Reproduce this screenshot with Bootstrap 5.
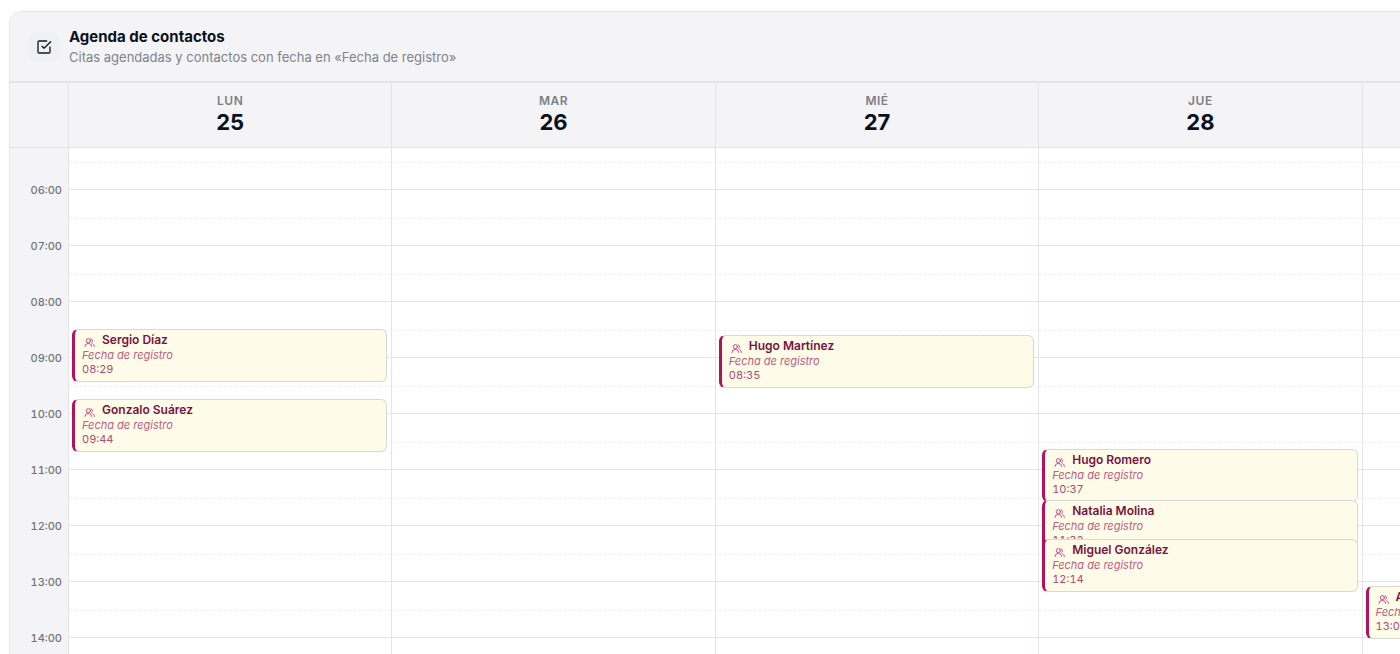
<!DOCTYPE html>
<html lang="es">
<head>
<meta charset="utf-8">
<meta name="viewport" content="width=device-width, initial-scale=1">
<title>Agenda de contactos</title>
<link rel="stylesheet" href="https://cdn.jsdelivr.net/npm/bootstrap@5.3.0/dist/css/bootstrap.min.css">
<style>
:root { --line: #e3e4e8; --panel: #f4f4f7; --hour: 56px; --gutter: 59px; }
body { font-family: Inter, "Liberation Sans", sans-serif; color: #09111f; background: #fff; }
.agenda { width: calc(120vw - 2px); margin: 11px 0 0 9px; border: 1px solid var(--line); border-radius: 12px; }
.agenda-head { background: var(--panel); border-bottom: 2px solid var(--line); padding: 14px 19px; height: 71px; gap: 10px; }
.tile { width: 30px; height: 30px; border-radius: 6px; background: #eff1f4; }
.agenda-title { font-size: 15px; line-height: 21px; font-weight: 700; }
.agenda-note { font-size: 13px; line-height: 21px; color: #7f838b; }
.days { display: grid; grid-template-columns: var(--gutter) repeat(5, 1fr); }
.day-head { background: var(--panel); border-bottom: 1px solid var(--line); border-right: 1px solid var(--line); height: 65px; padding-top: 9px; }
.day-name { font-size: 12px; line-height: 17px; font-weight: 600; letter-spacing: 0.5px; color: #7b7f87; }
.day-num { font-size: 22px; line-height: 26px; font-weight: 700; }
.board { display: grid; margin-top: -14px; }
.board > * { grid-area: 1 / 1; }
.hour-row { height: var(--hour); }
.hour-label { width: var(--gutter); background: var(--panel); padding: 0 7px 0 0; font-size: 11px; line-height: 16px; font-weight: 500; font-variant-numeric: tabular-nums; color: #6f747c; text-align: right; }
.hour-label span { margin-bottom: -8px; z-index: 1; }
.slot { border-bottom: 1px solid var(--line); }
.slot::before { content: ""; display: block; height: 29px; border-bottom: 1px dashed #f0f0f3; }
.lane { border-right: 1px solid var(--line); }
.event { top: calc((var(--min) - 300) * var(--hour) / 60); left: 3px; right: 4px; height: 53px; padding: 2px 6px 0 7px;
  background: #fefbe9; border: 1px solid #d6d9d6; border-left: 3px solid #b3125a; border-radius: 6px; overflow: hidden; white-space: nowrap; }
.event-name { font-size: 12px; line-height: 16px; font-weight: 600; color: #781340; gap: 7px; }
.event-name svg { margin: 5px 0 0 2px; }
.event-kind { font-size: 11px; line-height: 14px; font-style: oblique 14deg; color: #b9607f; }
.event-time { font-size: 11px; line-height: 14px; font-variant-numeric: tabular-nums; color: #ad4b70; }
</style>
<script src="https://cdn.jsdelivr.net/npm/bootstrap@5.3.0/dist/js/bootstrap.bundle.min.js"></script>
</head>
<body class="vh-100 overflow-hidden">
<svg class="d-none" aria-hidden="true">
  <symbol id="people" viewBox="0 0 24 24"><g fill="none" stroke="#bd3d79" stroke-width="2" stroke-linecap="round" stroke-linejoin="round"><path d="M2 20.500a7.500 6.500 0 0 1 15 0"/><circle cx="9.500" cy="8" r="4.500"/><path d="M15.500 4a4.500 4.500 0 0 1 1 8"/><path d="M19 14.500c2 1 3.500 3 3.500 6"/></g></symbol>
</svg>
<main class="agenda overflow-hidden">
  <header class="agenda-head d-flex align-items-center">
    <div class="tile d-flex align-items-center justify-content-center">
      <svg width="16" height="16" viewBox="0 0 24 24" fill="none" stroke="#111827" stroke-width="2" stroke-linecap="round" stroke-linejoin="round"><path d="m9 11 3 3L22 4"/><path d="M21 12v7a2 2 0 0 1-2 2H5a2 2 0 0 1-2-2V5a2 2 0 0 1 2-2h11"/></svg>
    </div>
    <div>
      <h1 class="agenda-title mb-0">Agenda de contactos</h1>
      <p class="agenda-note mb-0">Citas agendadas y contactos con fecha en «Fecha de registro»</p>
    </div>
  </header>
  <div class="days text-center position-relative z-3">
    <div class="day-head"></div>
    <div class="day-head"><div class="day-name">LUN</div><div class="day-num">25</div></div>
    <div class="day-head"><div class="day-name">MAR</div><div class="day-num">26</div></div>
    <div class="day-head"><div class="day-name">MIÉ</div><div class="day-num">27</div></div>
    <div class="day-head"><div class="day-name">JUE</div><div class="day-num">28</div></div>
    <div class="day-head"></div>
  </div>
  <div class="overflow-hidden">
  <div class="board">
    <div>
      <div class="hour-row d-flex"><div class="hour-label d-flex align-items-end justify-content-end"><span>06:00</span></div><div class="slot flex-grow-1"></div></div>
      <div class="hour-row d-flex"><div class="hour-label d-flex align-items-end justify-content-end"><span>07:00</span></div><div class="slot flex-grow-1"></div></div>
      <div class="hour-row d-flex"><div class="hour-label d-flex align-items-end justify-content-end"><span>08:00</span></div><div class="slot flex-grow-1"></div></div>
      <div class="hour-row d-flex"><div class="hour-label d-flex align-items-end justify-content-end"><span>09:00</span></div><div class="slot flex-grow-1"></div></div>
      <div class="hour-row d-flex"><div class="hour-label d-flex align-items-end justify-content-end"><span>10:00</span></div><div class="slot flex-grow-1"></div></div>
      <div class="hour-row d-flex"><div class="hour-label d-flex align-items-end justify-content-end"><span>11:00</span></div><div class="slot flex-grow-1"></div></div>
      <div class="hour-row d-flex"><div class="hour-label d-flex align-items-end justify-content-end"><span>12:00</span></div><div class="slot flex-grow-1"></div></div>
      <div class="hour-row d-flex"><div class="hour-label d-flex align-items-end justify-content-end"><span>13:00</span></div><div class="slot flex-grow-1"></div></div>
      <div class="hour-row d-flex"><div class="hour-label d-flex align-items-end justify-content-end"><span>14:00</span></div><div class="slot flex-grow-1"></div></div>
      <div class="hour-row d-flex"><div class="hour-label"></div><div class="slot flex-grow-1"></div></div>
    </div>
    <div class="days">
      <div class="lane"></div>
      <div class="lane position-relative">
        <article class="event position-absolute" style="--min:509"><div class="event-name d-flex"><svg width="11" height="11"><use href="#people"/></svg>Sergio Díaz</div><div class="event-kind">Fecha de registro</div><div class="event-time">08:29</div></article>
        <article class="event position-absolute" style="--min:584"><div class="event-name d-flex"><svg width="11" height="11"><use href="#people"/></svg>Gonzalo Suárez</div><div class="event-kind">Fecha de registro</div><div class="event-time">09:44</div></article>
      </div>
      <div class="lane"></div>
      <div class="lane position-relative">
        <article class="event position-absolute" style="--min:515"><div class="event-name d-flex"><svg width="11" height="11"><use href="#people"/></svg>Hugo Martínez</div><div class="event-kind">Fecha de registro</div><div class="event-time">08:35</div></article>
      </div>
      <div class="lane position-relative">
        <article class="event position-absolute" style="--min:637"><div class="event-name d-flex"><svg width="11" height="11"><use href="#people"/></svg>Hugo Romero</div><div class="event-kind">Fecha de registro</div><div class="event-time">10:37</div></article>
        <article class="event position-absolute" style="--min:692"><div class="event-name d-flex"><svg width="11" height="11"><use href="#people"/></svg>Natalia Molina</div><div class="event-kind">Fecha de registro</div><div class="event-time">11:32</div></article>
        <article class="event position-absolute" style="--min:734"><div class="event-name d-flex"><svg width="11" height="11"><use href="#people"/></svg>Miguel González</div><div class="event-kind">Fecha de registro</div><div class="event-time">12:14</div></article>
      </div>
      <div class="lane position-relative">
        <article class="event position-absolute" style="--min:784"><div class="event-name d-flex"><svg width="11" height="11"><use href="#people"/></svg>Ana</div><div class="event-kind">Fecha de registro</div><div class="event-time">13:04</div></article>
      </div>
    </div>
  </div>
  </div>
</main>
</body>
</html>
